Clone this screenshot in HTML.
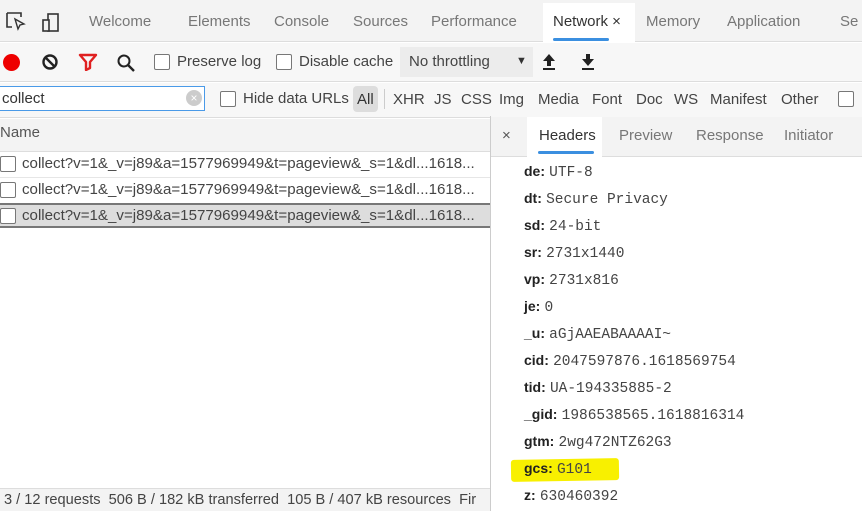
<!DOCTYPE html>
<html><head><meta charset="utf-8"><style>
*{margin:0;padding:0;box-sizing:border-box}
body{width:862px;height:521px;background:#fff;font-family:"Liberation Sans",sans-serif;color:#333;position:relative;overflow:hidden;font-size:15px}
.a{position:absolute;white-space:nowrap}
.g{color:#777}
.mono{font-family:"Liberation Mono",monospace;font-size:14.5px;color:#444}
.k{font-weight:bold;color:#222;font-size:14px}
.cb{position:absolute;width:16px;height:16px;border:1.5px solid #777;border-radius:2px;background:#fff}
.hl div{height:27px;line-height:27px}
</style></head><body>
<div class="a" style="left:0;top:0;width:862px;height:42px;background:#f3f3f3;border-bottom:1px solid #ddd"></div>
<svg class="a" style="left:5px;top:11px" width="60" height="24" viewBox="0 0 60 24"><path d="M2 2h14v4M2 2v14h5" stroke="#333" stroke-width="1.6" fill="none"/><path d="M10 8l9 5-4 1-2 4z" fill="none" stroke="#333" stroke-width="1.4"/><rect x="43" y="3" width="10" height="17" stroke="#333" stroke-width="1.6" fill="none"/><rect x="38" y="9" width="6" height="11" stroke="#333" stroke-width="1.6" fill="#f3f3f3"/></svg>
<div class="a g" style="left:89px;top:13px">Welcome</div>
<div class="a g" style="left:188px;top:13px">Elements</div>
<div class="a g" style="left:274px;top:13px">Console</div>
<div class="a g" style="left:353px;top:13px">Sources</div>
<div class="a g" style="left:431px;top:13px">Performance</div>
<div class="a" style="left:543px;top:3px;width:92px;height:39px;background:#fff"></div>
<div class="a" style="left:553px;top:13px;color:#333">Network ×</div>
<div class="a" style="left:553px;top:38px;width:56px;height:3px;background:#3b8fe0;border-radius:2px"></div>
<div class="a g" style="left:646px;top:13px">Memory</div>
<div class="a g" style="left:727px;top:13px">Application</div>
<div class="a g" style="left:840px;top:13px">Se</div>
<div class="a" style="left:0;top:43px;width:862px;height:39px;background:#f7f7f7;border-bottom:1px solid #ddd"></div>
<div class="a" style="left:3px;top:54px;width:17px;height:17px;border-radius:50%;background:#e00"></div>
<svg class="a" style="left:41px;top:53px" width="18" height="18"><circle cx="9" cy="9" r="6.5" stroke="#222" stroke-width="2.4" fill="none"/><path d="M4.5 4.5l9 9" stroke="#222" stroke-width="2.4"/></svg>
<svg class="a" style="left:78px;top:53px" width="20" height="18"><path d="M2 2h16l-6 7v6l-4 2v-8z" fill="none" stroke="#e02020" stroke-width="2.4" stroke-linejoin="round"/></svg>
<svg class="a" style="left:116px;top:53px" width="20" height="20"><circle cx="8" cy="8" r="5.5" stroke="#222" stroke-width="2" fill="none"/><path d="M12 12l6 6" stroke="#222" stroke-width="2.4"/></svg>
<div class="cb" style="left:154px;top:54px"></div>
<div class="a" style="left:177px;top:53px;color:#444">Preserve log</div>
<div class="cb" style="left:276px;top:54px"></div>
<div class="a" style="left:299px;top:53px;color:#444">Disable cache</div>
<div class="a" style="left:400px;top:47px;width:133px;height:30px;background:#ececec"></div>
<div class="a" style="left:409px;top:53px;color:#444">No throttling</div>
<div class="a" style="left:516px;top:55px;font-size:11px">▼</div>
<svg class="a" style="left:541px;top:52px" width="16" height="20"><path d="M8 2l6 7H10v5H6V9H2z" fill="#222"/><path d="M2 17h12" stroke="#222" stroke-width="2"/></svg>
<svg class="a" style="left:580px;top:52px" width="16" height="20"><path d="M8 14l6-7H10V2H6v5H2z" fill="#222"/><path d="M2 17h12" stroke="#222" stroke-width="2"/></svg>
<div class="a" style="left:0;top:83px;width:862px;height:35px;background:#f7f7f7;border-bottom:1px solid #ddd"></div>
<div class="a" style="left:-2px;top:86px;width:207px;height:25px;background:#fff;border:1.5px solid #4a9ae8"></div>
<div class="a" style="left:2px;top:90px;color:#333">collect</div>
<div class="a" style="left:186px;top:90px;width:16px;height:16px;border-radius:50%;background:#ccc;color:#fff;font-size:12px;line-height:16px;text-align:center">×</div>
<div class="cb" style="left:220px;top:91px"></div>
<div class="a" style="left:243px;top:90px;color:#444">Hide data URLs</div>
<div class="a" style="left:353px;top:86px;width:25px;height:26px;background:#ddd;border-radius:4px"></div>
<div class="a" style="left:357px;top:91px;color:#333">All</div>
<div class="a" style="left:384px;top:89px;width:1px;height:20px;background:#ccc"></div>
<div class="a" style="left:393px;top:91px;color:#444">XHR</div>
<div class="a" style="left:434px;top:91px;color:#444">JS</div>
<div class="a" style="left:461px;top:91px;color:#444">CSS</div>
<div class="a" style="left:499px;top:91px;color:#444">Img</div>
<div class="a" style="left:538px;top:91px;color:#444">Media</div>
<div class="a" style="left:592px;top:91px;color:#444">Font</div>
<div class="a" style="left:636px;top:91px;color:#444">Doc</div>
<div class="a" style="left:674px;top:91px;color:#444">WS</div>
<div class="a" style="left:710px;top:91px;color:#444">Manifest</div>
<div class="a" style="left:781px;top:91px;color:#444">Other</div>
<div class="cb" style="left:838px;top:91px"></div>
<div class="a" style="left:0;top:119px;width:490px;height:33px;background:#f3f3f3;border-bottom:1px solid #ddd"></div>
<div class="a" style="left:0;top:124px;color:#555">Name</div>
<div class="a" style="left:0;top:203px;width:490px;height:25px;background:#ddd;border-top:2px solid #777;border-bottom:2px solid #777"></div>
<div class="a" style="left:0;top:177px;width:490px;height:1px;background:#e6e6e6"></div>
<div style="font-size:15.1px">
<div class="cb" style="left:0;top:156px"></div><div class="a" style="left:22px;top:155px;color:#444">collect?v=1&amp;_v=j89&amp;a=1577969949&amp;t=pageview&amp;_s=1&amp;dl...1618...</div>
<div class="cb" style="left:0;top:182px"></div><div class="a" style="left:22px;top:181px;color:#444">collect?v=1&amp;_v=j89&amp;a=1577969949&amp;t=pageview&amp;_s=1&amp;dl...1618...</div>
<div class="cb" style="left:0;top:208px"></div><div class="a" style="left:22px;top:207px;color:#444">collect?v=1&amp;_v=j89&amp;a=1577969949&amp;t=pageview&amp;_s=1&amp;dl...1618...</div>
</div>
<div class="a" style="left:490px;top:116px;width:1px;height:395px;background:#ccc"></div>
<div class="a" style="left:491px;top:117px;width:371px;height:40px;background:#f3f3f3;border-bottom:1px solid #ddd"></div>
<div class="a" style="left:502px;top:127px;color:#555">×</div>
<div class="a" style="left:527px;top:117px;width:75px;height:40px;background:#fff"></div>
<div class="a" style="left:539px;top:127px;color:#333">Headers</div>
<div class="a" style="left:538px;top:151px;width:56px;height:3px;background:#3b8fe0;border-radius:2px"></div>
<div class="a g" style="left:619px;top:127px">Preview</div>
<div class="a g" style="left:696px;top:127px">Response</div>
<div class="a g" style="left:784px;top:127px">Initiator</div>
<div class="a" style="left:511px;top:459px;width:108px;height:22px;background:#f8f000;border-radius:3px;transform:rotate(-1deg)"></div>
<div class="a hl" style="left:524px;top:158px">
<div><span class="k">de:</span> <span class="mono">UTF-8</span></div>
<div><span class="k">dt:</span> <span class="mono">Secure Privacy</span></div>
<div><span class="k">sd:</span> <span class="mono">24-bit</span></div>
<div><span class="k">sr:</span> <span class="mono">2731x1440</span></div>
<div><span class="k">vp:</span> <span class="mono">2731x816</span></div>
<div><span class="k">je:</span> <span class="mono">0</span></div>
<div><span class="k">_u:</span> <span class="mono">aGjAAEABAAAAI~</span></div>
<div><span class="k">cid:</span> <span class="mono">2047597876.1618569754</span></div>
<div><span class="k">tid:</span> <span class="mono">UA-194335885-2</span></div>
<div><span class="k">_gid:</span> <span class="mono">1986538565.1618816314</span></div>
<div><span class="k">gtm:</span> <span class="mono">2wg472NTZ62G3</span></div>
<div><span class="k">gcs:</span> <span class="mono">G101</span></div>
<div><span class="k">z:</span> <span class="mono">630460392</span></div>
</div>
<div class="a" style="left:0;top:488px;width:490px;height:23px;background:#f3f3f3;border-top:1px solid #ddd;overflow:hidden">
<div class="a" style="left:4px;top:3px;color:#444;font-size:14.6px">3 / 12 requests&nbsp; 506 B / 182 kB transferred&nbsp; 105 B / 407 kB resources&nbsp; Fir</div>
</div>
</body></html>
